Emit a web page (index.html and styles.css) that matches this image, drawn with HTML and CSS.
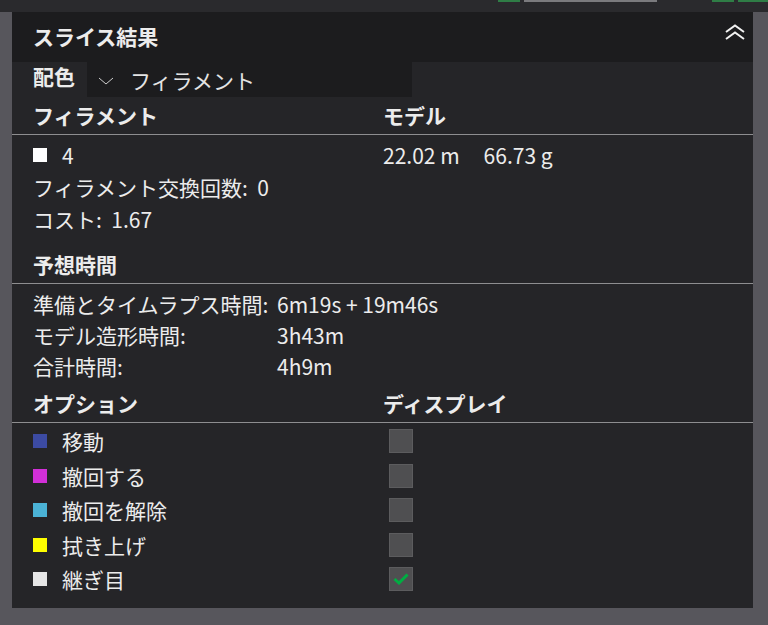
FILE: index.html
```html
<!DOCTYPE html>
<html lang="ja">
<head>
  <meta charset="UTF-8" />
  <title>スライス結果</title>
  <meta name="viewport" content="width=device-width, initial-scale=1.0" />
  <link rel="stylesheet" href="styles.css">
</head>
<body>
  <!-- toolbar edge above the panel -->
  <div class="topbar">
    <span class="tb-green tb-g1"></span>
    <span class="tb-gray"></span>
    <span class="tb-green tb-g2"></span>
    <span class="tb-green tb-g3"></span>
  </div>

  <div class="panel">
    <div class="panel-head">
      <span class="panel-title">スライス結果</span>
      <svg class="collapse" width="22" height="16" viewBox="0 0 22 16">
        <polyline points="2,8 11,1.5 20,8" />
        <polyline points="2,15 11,8.5 20,15" />
      </svg>
    </div>

    <div class="scheme-row">
      <span class="scheme-label">配色</span>
      <div class="select">
        <svg class="select-arrow" width="16" height="8" viewBox="0 0 16 8">
          <polyline points="1,1 8,7 15,1" />
        </svg>
        <span>フィラメント</span>
      </div>
    </div>

    <div class="sec-head cols">
      <span>フィラメント</span>
      <span>モデル</span>
    </div>
    <div class="sec-body">
      <div class="row cols">
        <span class="item"><i class="swatch sw-white"></i>4</span>
        <span class="usage"><span>22.02 m</span><span>66.73 g</span></span>
      </div>
      <div class="row">フィラメント交換回数:&nbsp; 0</div>
      <div class="row">コスト:&nbsp; 1.67</div>
    </div>

    <div class="sec-head gap-top">
      <span>予想時間</span>
    </div>
    <div class="sec-body times">
      <div class="trow"><span>準備とタイムラプス時間:</span><span>6m19s + 19m46s</span></div>
      <div class="trow"><span>モデル造形時間:</span><span>3h43m</span></div>
      <div class="trow"><span>合計時間:</span><span>4h9m</span></div>
    </div>

    <div class="sec-head cols">
      <span>オプション</span>
      <span>ディスプレイ</span>
    </div>
    <div class="options">
      <div class="orow cols">
        <span class="item"><i class="swatch sw-move"></i>移動</span>
        <span class="check"></span>
      </div>
      <div class="orow cols">
        <span class="item"><i class="swatch sw-retract"></i>撤回する</span>
        <span class="check"></span>
      </div>
      <div class="orow cols">
        <span class="item"><i class="swatch sw-unretract"></i>撤回を解除</span>
        <span class="check"></span>
      </div>
      <div class="orow cols">
        <span class="item"><i class="swatch sw-wipe"></i>拭き上げ</span>
        <span class="check"></span>
      </div>
      <div class="orow cols">
        <span class="item"><i class="swatch sw-seam"></i>継ぎ目</span>
        <span class="check on">
          <svg width="16" height="12" viewBox="0 0 16 12">
            <polyline points="1.5,6 6,10 14.5,1.5" />
          </svg>
        </span>
      </div>
    </div>
  </div>
</body>
</html>
```

FILE: styles.css
```css
body {
  margin: 0;
  background: #57565c;
  font-family: "Noto Sans CJK JP", "Noto Sans", sans-serif;
  font-size: 21px;
  color: #ececec;
  height: 625px;
  overflow: hidden;
}

.topbar {
  height: 12px;
  background: #2a2a2d;
  display: flex;
  align-items: flex-start;
}

.tb-green {
  height: 2px;
  background: #2f7d46;
}

.tb-g1 { width: 22px; margin-left: 498px; }
.tb-g2 { width: 22px; margin-left: 55px; }
.tb-g3 { width: 30px; margin-left: 4px; }

.tb-gray {
  width: 133px;
  height: 2px;
  margin-left: 4px;
  background: #7b7b7e;
}

.panel {
  margin-left: 12px;
  width: 741px;
  background: #252528;
  padding-bottom: 11px;
}

.panel-head {
  height: 50px;
  background: #1c1c1e;
  display: flex;
  align-items: center;
  justify-content: space-between;
  padding: 0 7px 0 21px;
}

.panel-title {
  font-weight: bold;
  margin-top: -2px;
}

.collapse {
  margin-top: -10px;
}

.collapse polyline {
  fill: none;
  stroke: #f2f2f2;
  stroke-width: 2;
}

.scheme-row {
  height: 35px;
  display: flex;
  align-items: stretch;
  padding-left: 21px;
}

.scheme-label {
  font-weight: bold;
  line-height: 1;
  padding-top: 4px;
  width: 54px;
}

.select {
  width: 325px;
  background: #1c1c1e;
  display: flex;
  align-items: center;
  padding-left: 11px;
  box-sizing: border-box;
  color: #e4e4e4;
}

.select-arrow {
  margin: 2px 16px 0 0;
}

.select-arrow polyline {
  fill: none;
  stroke: #cfcfcf;
  stroke-width: 1;
}

.cols {
  display: grid;
  grid-template-columns: 350px 1fr;
}

.sec-head {
  height: 38px;
  box-sizing: border-box;
  padding-left: 21px;
  border-bottom: 1px solid #8e8e90;
  font-weight: bold;
  align-items: center;
  display: grid;
  line-height: 1;
}

.sec-head.cols {
  grid-template-columns: 350px 1fr;
}

.gap-top {
  margin-top: 11px;
}

.sec-body {
  padding: 4px 0 0 21px;
}

.row {
  height: 32px;
  display: flex;
  align-items: center;
}

.row.cols {
  display: grid;
}

.item {
  display: flex;
  align-items: center;
}

.swatch {
  width: 14px;
  height: 14px;
  margin-right: 15px;
  display: inline-block;
}

.sw-white { background: #ffffff; }
.sw-move { background: #3c4ba3; }
.sw-retract { background: #d22fd8; }
.sw-unretract { background: #4bb3d6; }
.sw-wipe { background: #ffff00; }
.sw-seam { background: #e6e6e6; }

.usage {
  display: flex;
  gap: 24px;
  align-items: center;
}

.times .trow {
  height: 31px;
  display: grid;
  grid-template-columns: 244px 1fr;
  align-items: center;
}

.times + .sec-head {
  margin-top: 4px;
}

.options {
  padding: 1px 0 0 21px;
}

.orow {
  height: 34.5px;
  align-items: center;
}

.check {
  width: 24px;
  height: 24px;
  box-sizing: border-box;
  margin-left: 6px;
  background: #4f4f51;
  border: 1px solid #5c5c5e;
  display: flex;
  align-items: center;
  justify-content: center;
}

.check polyline {
  fill: none;
  stroke: #00ae42;
  stroke-width: 3;
}
```
